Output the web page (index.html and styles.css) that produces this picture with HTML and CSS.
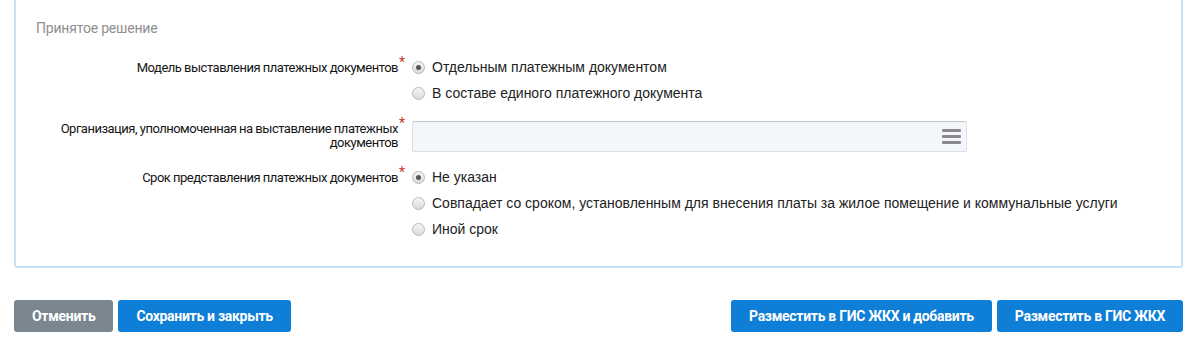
FILE: index.html
```html
<!DOCTYPE html>
<html lang="ru">

<head>
    <meta charset="UTF-8">
    <title>Принятое решение</title>
    <link rel="stylesheet" href="styles.css">
</head>

<body>
    <div class="panel">
        <div class="panel-title">Принятое решение</div>

        <div class="form">
            <div class="form-row">
                <div class="form-label">Модель выставления платежных документов<span class="req">*</span></div>
                <div class="form-field">
                    <label class="radio"><span class="radio-dot checked"></span>Отдельным платежным документом</label>
                    <label class="radio"><span class="radio-dot"></span>В составе единого платежного документа</label>
                </div>
            </div>

            <div class="form-row">
                <div class="form-label">Организация, уполномоченная на выставление платежных<span class="req">*</span><br>документов<span class="req-space"></span></div>
                <div class="form-field">
                    <div class="select-box">
                        <span class="menu-icon"><i></i><i></i><i></i></span>
                    </div>
                </div>
            </div>

            <div class="form-row">
                <div class="form-label">Срок представления платежных документов<span class="req">*</span></div>
                <div class="form-field">
                    <label class="radio"><span class="radio-dot checked"></span>Не указан</label>
                    <label class="radio"><span class="radio-dot"></span>Совпадает со сроком, установленным для внесения платы за жилое помещение и коммунальные услуги</label>
                    <label class="radio"><span class="radio-dot"></span>Иной срок</label>
                </div>
            </div>
        </div>
    </div>

    <div class="actions">
        <div class="actions-left">
            <button class="btn btn-gray">Отменить</button>
            <button class="btn">Сохранить и закрыть</button>
        </div>
        <div class="actions-right">
            <button class="btn">Разместить в ГИС ЖКХ и добавить</button>
            <button class="btn">Разместить в ГИС ЖКХ</button>
        </div>
    </div>
</body>

</html>
```

FILE: styles.css
```css
body {
    margin: 0;
    padding: 0 11px 0 14px;
    background: #fff;
    font-family: Arial, "Liberation Sans", sans-serif;
    font-size: 14px;
    color: #222;
}

.panel {
    border: 2px solid #c6e0f5;
    border-top: none;
    border-radius: 0 0 3px 3px;
    padding: 20px 0 24px 20px;
}

.panel-title {
    font-family: "Roboto", sans-serif;
    font-size: 14px;
    line-height: 16px;
    letter-spacing: -0.2px;
    color: #8f8f8f;
    margin-bottom: 24px;
}

.form {
    display: flex;
    flex-direction: column;
    gap: 15px;
}

.form-row {
    display: flex;
    align-items: flex-start;
}

.form-label {
    width: 370px;
    flex-shrink: 0;
    text-align: right;
    white-space: nowrap;
    font-family: "Roboto", sans-serif;
    font-size: 13px;
    letter-spacing: -0.5px;
    line-height: 14px;
    color: #151515;
}

.req {
    display: inline-block;
    width: 7px;
    text-align: left;
    color: #c0392b;
    font-size: 14px;
    position: relative;
    top: -5px;
    margin-left: 1px;
}

.req-space {
    display: inline-block;
    width: 8px;
}

.form-field {
    margin-left: 6px;
    flex: 1;
}

.radio {
    display: flex;
    align-items: center;
    height: 26px;
    color: #222;
}

.radio:first-child {
    margin-top: -6px;
}

.radio-dot {
    width: 11px;
    height: 11px;
    border: 1px solid #b8b8b8;
    border-radius: 50%;
    background: linear-gradient(#f6f6f6, #dadada);
    margin-right: 7px;
    position: relative;
    flex-shrink: 0;
}

.radio-dot.checked::after {
    content: "";
    position: absolute;
    left: 3px;
    top: 3px;
    width: 5px;
    height: 5px;
    border-radius: 50%;
    background: #555;
}

.select-box {
    width: 548px;
    height: 29px;
    border: 1px solid #dcdfe3;
    border-top-color: #c4c4c4;
    border-radius: 2px;
    background: #f3f6fa;
    display: flex;
    justify-content: flex-end;
    align-items: center;
    padding-right: 5px;
    margin-bottom: 3px;
}

.menu-icon {
    display: flex;
    flex-direction: column;
    gap: 3px;
}

.menu-icon i {
    display: block;
    width: 19px;
    height: 3px;
    background: #8a8a8a;
    border-radius: 1px;
}

.actions {
    display: flex;
    justify-content: space-between;
    margin-top: 32px;
}

.actions-left,
.actions-right {
    display: flex;
    gap: 5px;
}

.btn {
    height: 32px;
    padding: 0 18px;
    border: none;
    border-radius: 3px;
    background: #0e7ed6;
    color: #fff;
    font-family: "Roboto", sans-serif;
    font-size: 14px;
    font-weight: bold;
    letter-spacing: -0.3px;
    cursor: pointer;
}

.btn-gray {
    background: #7a8791;
}
```
